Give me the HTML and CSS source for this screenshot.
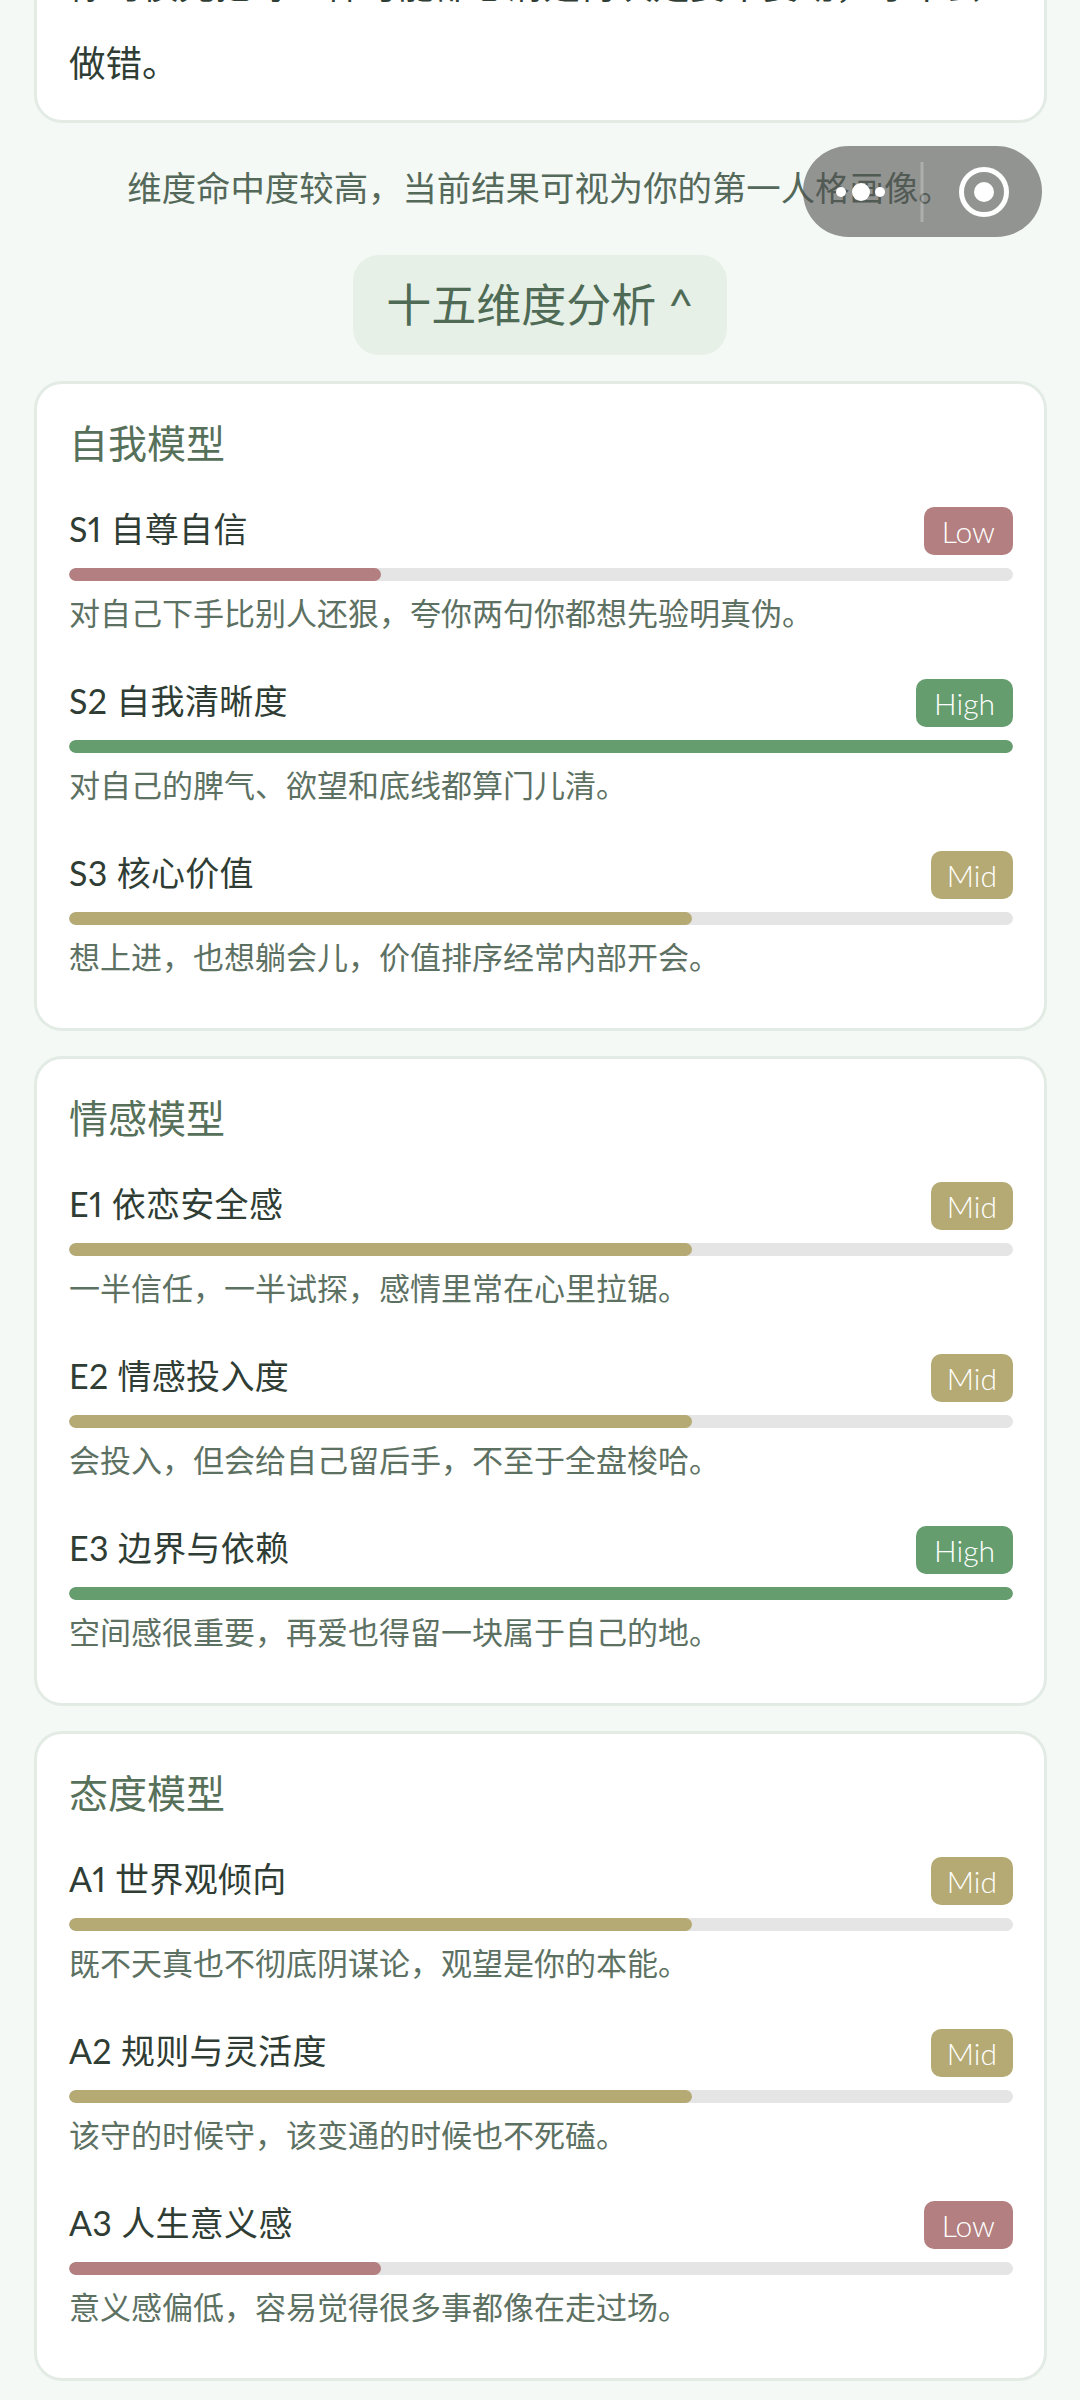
FILE: index.html
```html
<!DOCTYPE html>
<html lang="zh-CN">
<head>
    <meta charset="UTF-8">
    <meta name="viewport" content="width=device-width, initial-scale=1.0">
    <title>十五维度分析</title>
    <link rel="stylesheet" href="styles.css">
</head>
<body>
    <div class="page">
        <div class="card summary">
            <p>你习惯先把每一种可能都想清楚再决定要不要动，才不会做错。</p>
        </div>

        <p class="note">维度命中度较高，当前结果可视为你的第一人格画像。</p>

        <button class="toggle">十五维度分析 ^</button>

        <section class="card">
            <h3>自我模型</h3>
            <div class="row">
                <div class="row-head"><span class="name">S1 自尊自信</span><span class="badge low">Low</span></div>
                <div class="track"><div class="fill low"></div></div>
                <p class="desc">对自己下手比别人还狠，夸你两句你都想先验明真伪。</p>
            </div>
            <div class="row">
                <div class="row-head"><span class="name">S2 自我清晰度</span><span class="badge high">High</span></div>
                <div class="track"><div class="fill high"></div></div>
                <p class="desc">对自己的脾气、欲望和底线都算门儿清。</p>
            </div>
            <div class="row">
                <div class="row-head"><span class="name">S3 核心价值</span><span class="badge mid">Mid</span></div>
                <div class="track"><div class="fill mid"></div></div>
                <p class="desc">想上进，也想躺会儿，价值排序经常内部开会。</p>
            </div>
        </section>

        <section class="card">
            <h3>情感模型</h3>
            <div class="row">
                <div class="row-head"><span class="name">E1 依恋安全感</span><span class="badge mid">Mid</span></div>
                <div class="track"><div class="fill mid"></div></div>
                <p class="desc">一半信任，一半试探，感情里常在心里拉锯。</p>
            </div>
            <div class="row">
                <div class="row-head"><span class="name">E2 情感投入度</span><span class="badge mid">Mid</span></div>
                <div class="track"><div class="fill mid"></div></div>
                <p class="desc">会投入，但会给自己留后手，不至于全盘梭哈。</p>
            </div>
            <div class="row">
                <div class="row-head"><span class="name">E3 边界与依赖</span><span class="badge high">High</span></div>
                <div class="track"><div class="fill high"></div></div>
                <p class="desc">空间感很重要，再爱也得留一块属于自己的地。</p>
            </div>
        </section>

        <section class="card">
            <h3>态度模型</h3>
            <div class="row">
                <div class="row-head"><span class="name">A1 世界观倾向</span><span class="badge mid">Mid</span></div>
                <div class="track"><div class="fill mid"></div></div>
                <p class="desc">既不天真也不彻底阴谋论，观望是你的本能。</p>
            </div>
            <div class="row">
                <div class="row-head"><span class="name">A2 规则与灵活度</span><span class="badge mid">Mid</span></div>
                <div class="track"><div class="fill mid"></div></div>
                <p class="desc">该守的时候守，该变通的时候也不死磕。</p>
            </div>
            <div class="row">
                <div class="row-head"><span class="name">A3 人生意义感</span><span class="badge low">Low</span></div>
                <div class="track"><div class="fill low"></div></div>
                <p class="desc">意义感偏低，容易觉得很多事都像在走过场。</p>
            </div>
        </section>
    </div>

    <!-- mini program capsule, floats over the page -->
    <div class="capsule">
        <svg class="capsule-icons" width="239" height="91" viewBox="0 0 239 91">
            <circle cx="38" cy="46" r="5" fill="#fff"/>
            <circle cx="58" cy="46" r="9" fill="#fff"/>
            <circle cx="77" cy="46" r="5" fill="#fff"/>
            <rect x="117.500" y="16" width="3" height="60" fill="#fff" fill-opacity="0.25"/>
            <circle cx="181" cy="46" r="22.500" fill="none" stroke="#fff" stroke-width="5"/>
            <circle cx="181" cy="46" r="10" fill="#fff"/>
        </svg>
    </div>
</body>
</html>
```

FILE: styles.css
```css
* {
    box-sizing: border-box;
}
html, body {
    margin: 0;
    height: 2400px;
    overflow: hidden;
}
body {
    position: relative;
    background-color: #f4f9f5;
    font-family: Lato, "Noto Sans CJK SC", sans-serif;
    font-variant-numeric: proportional-nums;
    color: #2f3d34;
}
.page {
    padding: 0 34px;
}
.card {
    background-color: #fff;
    border: 3px solid #e3ebe5;
    border-radius: 28px;
    padding: 34px 31px 48px 32px;
    margin: 0 -1px 25px 0;
}
/* scrolled page, this card starts above the top edge */
.summary {
    margin-top: -57px;
    margin-bottom: 0;
    padding: 0 31px 18px 32px;
}
.summary p {
    margin: 0;
    font-size: 36.500px;
    line-height: 78px;
    color: #2f3d34;
}
.note {
    margin: 40px 0 42px;
    font-size: 34.400px;
    line-height: 50px;
    text-align: center;
    color: #55695b;
}
.toggle {
    display: block;
    margin: 0 auto 26px;
    width: 374px;
    height: 100px;
    padding: 0 0 6px;
    border: none;
    border-radius: 26px;
    background-color: #e6f0e7;
    font-family: inherit;
    font-size: 45px;
    color: #4f6b55;
}
h3 {
    margin: 0 0 39px;
    font-size: 39px;
    font-weight: 400;
    line-height: 50px;
    color: #567059;
}
.row {
    margin-bottom: 43px;
}
.row:last-child {
    margin-bottom: 0;
}
.row-head {
    display: flex;
    justify-content: space-between;
    align-items: flex-start;
    height: 48px;
}
.name {
    font-size: 34px;
    line-height: 44px;
    letter-spacing: 0.300px;
    color: #2f3d34;
}
.badge {
    height: 48px;
    padding: 0 18px;
    border-radius: 10px;
    font-size: 30px;
    font-weight: 300;
    line-height: 48px;
    color: #fff;
}
.badge.mid {
    padding: 0 16px;
}
.badge.low, .fill.low {
    background-color: #b37f80;
}
.badge.mid, .fill.mid {
    background-color: #b5aa74;
}
.badge.high, .fill.high {
    background-color: #659d6f;
}
.track {
    height: 13px;
    margin-top: 13px;
    border-radius: 7px;
    background-color: #e5e5e5;
    overflow: hidden;
}
.fill {
    height: 100%;
    border-radius: 7px;
}
.fill.low {
    width: 33%;
}
.fill.mid {
    width: 66%;
}
.fill.high {
    width: 100%;
}
.desc {
    margin: 9px 0 0;
    font-size: 31px;
    line-height: 46px;
    color: #5d7163;
}
.capsule {
    position: absolute;
    left: 803px;
    top: 146px;
    width: 239px;
    height: 91px;
    border-radius: 46px;
    background-color: rgba(80, 80, 80, 0.6);
}
.capsule-icons {
    display: block;
}
```
